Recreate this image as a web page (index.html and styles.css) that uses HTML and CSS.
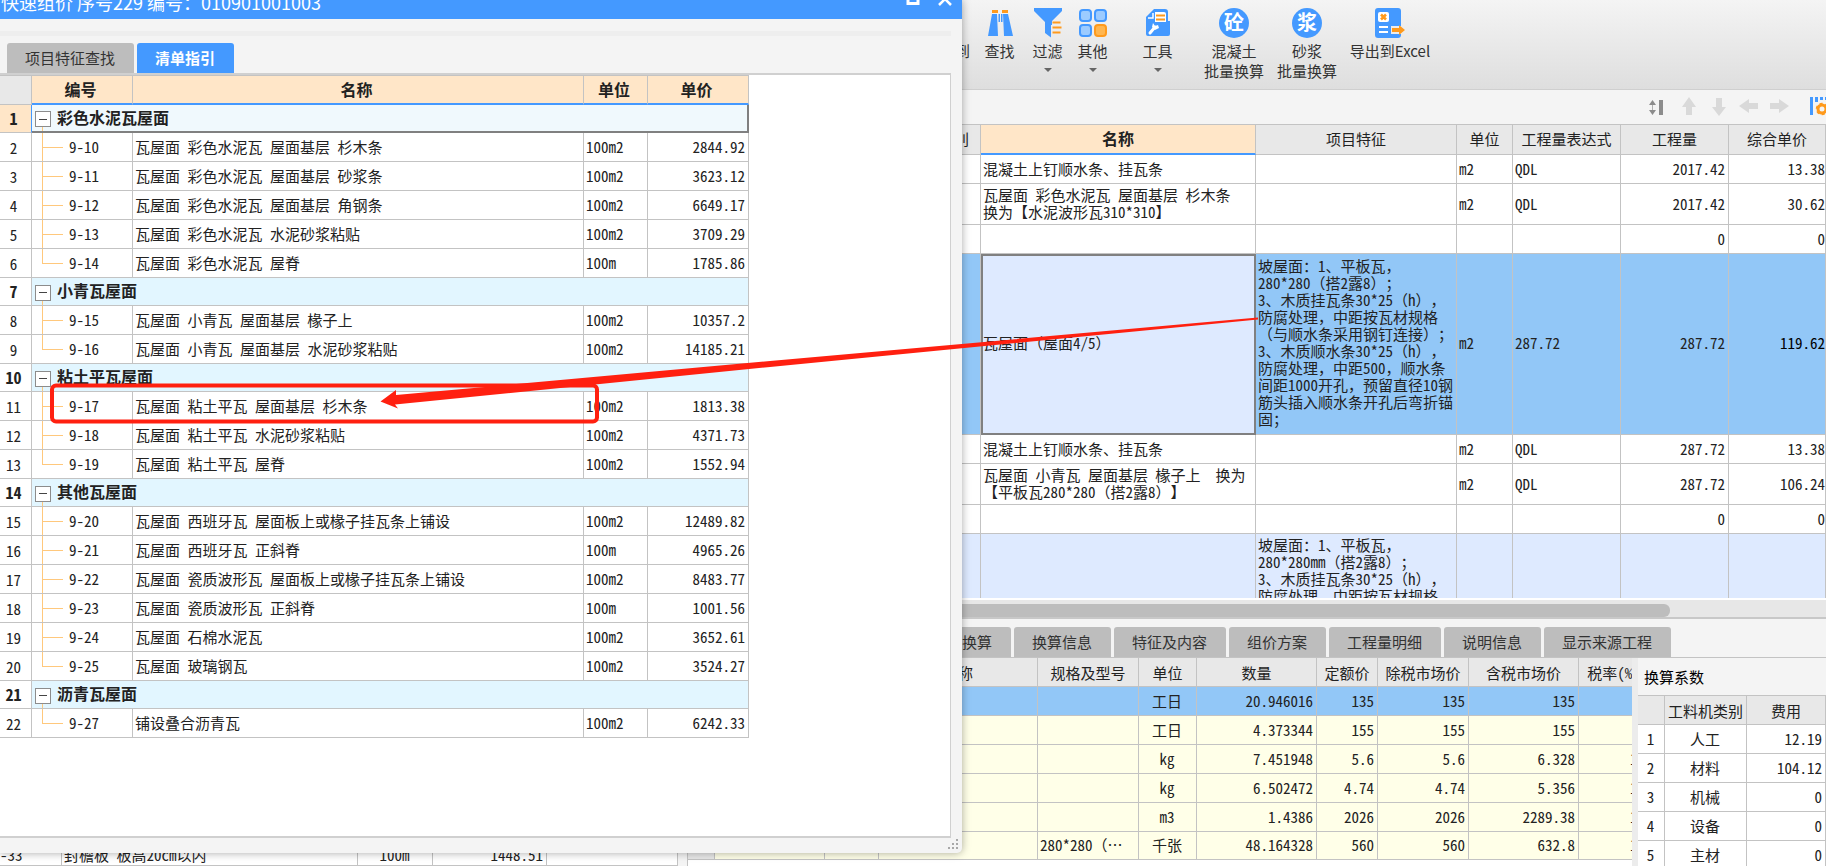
FILE: index.html
```
<!DOCTYPE html>
<html lang="zh-CN">
<head>
<meta charset="utf-8">
<title>快速组价</title>
<link rel="stylesheet" href="styles.css">
</head>
<body>
<main class="app">
  <nav class="ribbon">
    <button class="tool tool-cut"><span>到</span></button>
    <button class="tool find">
      <svg class="icon" viewBox="0 0 30 30"><path fill="#4499ff" d="M7 6h5l1 22H3zM18 6h5l5 22h-9zM13.500 6h1.500v8h-1.500zM16 6h1.500v8H16z"/><path fill="#ff9a1c" d="M7 2h6v3H7zM17 2h6v3h-6z"/></svg>
      <span>查找</span>
    </button>
    <button class="tool">
      <svg class="icon" viewBox="0 0 30 30"><path fill="#4499ff" d="M1 0h28v3L19 13v4h-1v12.500l-6-4.500V14L1 3z"/><path stroke="#ff9a1c" stroke-width="2" d="M19.500 14.500h8M19.500 19.500h9M19.500 24.500h8"/></svg>
      <span>过滤</span><i class="caret"></i>
    </button>
    <button class="tool">
      <svg class="icon" viewBox="0 0 30 30"><g stroke-width="2" stroke="#4499ff" fill="#9ccbff"><rect x="2" y="2" width="11" height="11" rx="3"/><rect x="17" y="2" width="11" height="11" rx="3"/><rect x="2" y="17" width="11" height="11" rx="3"/><rect x="17" y="17" width="11" height="11" rx="3" stroke="#ff9a1c" fill="#ffb650"/></g></svg>
      <span>其他</span><i class="caret"></i>
    </button>
    <button class="tool settings">
      <svg class="icon" viewBox="0 0 30 30"><path fill="#4499ff" d="M11 1h11q3 0 3 3v9h2v13q0 2-2 2H5q-2 0-2-2V9z"/><path fill="#fff" d="M12 4h9q2 0 2 2v8H12z"/><path stroke="#ff9a1c" stroke-width="2" d="M13 7.500h9M13 11.500h9"/><path fill="none" stroke="#fff" stroke-width="1.500" d="M10 5v5H5"/><path stroke="#fff" stroke-width="3" stroke-linecap="round" d="M7 25l5-6"/><path fill="#fff" d="M10 15l2 3 3-1 1 3-4 2-3-3z"/></svg>
      <span>工具</span><i class="caret"></i>
    </button>
    <button class="tool wide concrete"><b class="round">砼</b><span>混凝土<br>批量换算</span></button>
    <button class="tool wide mortar"><b class="round">浆</b><span>砂浆<br>批量换算</span></button>
    <button class="tool excel">
      <svg class="icon" viewBox="0 0 30 30"><rect x="0" y="0" width="26" height="30" rx="3" fill="#4499ff"/><rect x="3" y="4" width="11" height="10" rx="2" fill="#fff"/><path stroke="#ff9a1c" stroke-width="2.500" d="M6 6.500l5 5M11 6.500l-5 5"/><path stroke="#fff" stroke-width="2" d="M4 19h9M4 24h9"/><path stroke="#ececec" stroke-width="8" d="M16 22h11"/><path fill="#ff9a1c" d="M17 20h7v-3l6 5-6 5v-3h-7z"/></svg>
      <span>导出到Excel</span>
    </button>
  </nav>

  <div class="subbar">
    <button class="mini" aria-label="行高"><svg viewBox="0 0 20 20"><path fill="#8c8c8c" d="M0 8l3.500-5L7 8zM0 13l3.500 5L7 13zM10 3h4v15h-4z"/><path stroke="#b0b0b0" d="M3.500 8v5"/></svg></button>
    <button class="mini" aria-label="上移"><svg viewBox="0 0 20 20"><path fill="#d9d9d9" d="M10 0l7 10h-4v8H7v-8H3z"/></svg></button>
    <button class="mini" aria-label="下移"><svg viewBox="0 0 20 20"><path fill="#d9d9d9" d="M10 19L3 10h4V1h6v9h4z"/></svg></button>
    <button class="mini" aria-label="左移"><svg viewBox="0 0 20 20"><path fill="#d9d9d9" d="M0 9l10-7v4h9v6h-9v4z"/></svg></button>
    <button class="mini" aria-label="右移"><svg viewBox="0 0 20 20"><path fill="#d9d9d9" d="M20 9l-10-7v4H1v6h9v4z"/></svg></button>
    <button class="mini columns" aria-label="列设置"><svg viewBox="0 0 20 20"><path fill="#4499ff" d="M0 0h3v18H0zM5 0h3v5H5zM10 0h3v3h-3zM15 0h3v3h-3z"/><circle cx="12" cy="12" r="4" fill="none" stroke="#ff9a1c" stroke-width="3"/><circle cx="12" cy="12" r="5.500" fill="none" stroke="#ff9a1c" stroke-width="1.500" stroke-dasharray="3 2.700"/></svg></button>
  </div>

  <section class="budget">
    <table class="grid">
      <colgroup><col class="w-back"><col class="w-kind"><col><col class="w-feature"><col class="w-56"><col class="w-expr"><col class="w-qty"><col class="w-rate"></colgroup>
      <thead><tr><th></th><th class="kind">别</th><th class="current">名称</th><th>项目特征</th><th>单位</th><th>工程量表达式</th><th>工程量</th><th>综合单价</th></tr></thead>
      <tbody>
        <tr class="h29"><td></td><td></td><td>混凝土上钉顺水条、挂瓦条</td><td></td><td>m2</td><td>QDL</td><td class="num">2017.42</td><td class="num edge">13.38</td></tr>
        <tr class="h41"><td></td><td></td><td>瓦屋面 彩色水泥瓦 屋面基层 杉木条<br>换为【水泥波形瓦310*310】</td><td></td><td>m2</td><td>QDL</td><td class="num">2017.42</td><td class="num edge">30.62</td></tr>
        <tr class="h29"><td></td><td></td><td></td><td></td><td></td><td></td><td class="num">0</td><td class="num edge">0</td></tr>
        <tr class="h181 selected"><td></td><td></td><td class="focus">瓦屋面<span class="full">（</span>屋面4/5<span class="full">）</span></td><td>坡屋面：1、平板瓦<span class="full">，</span><br>280*280<span class="full">（</span>搭2露8<span class="full">）；</span><br>3、木质挂瓦条30*25<span class="full">（</span>h<span class="full">），</span><br>防腐处理<span class="full">，</span>中距按瓦材规格<br><span class="full">（</span>与顺水条采用钢钉连接<span class="full">）；</span><br>3、木质顺水条30*25<span class="full">（</span>h<span class="full">），</span><br>防腐处理<span class="full">，</span>中距500<span class="full">，</span>顺水条<br>间距1000开孔<span class="full">，</span>预留直径10钢<br>筋头插入顺水条开孔后弯折锚<br>固<span class="full">；</span></td><td>m2</td><td>287.72</td><td class="num">287.72</td><td class="num edge strong">119.62</td></tr>
        <tr class="h29"><td></td><td></td><td>混凝土上钉顺水条、挂瓦条</td><td></td><td>m2</td><td>QDL</td><td class="num">287.72</td><td class="num edge">13.38</td></tr>
        <tr class="h41"><td></td><td></td><td>瓦屋面 小青瓦 屋面基层 椽子上&nbsp; 换为<br>【平板瓦280*280<span class="full">（</span>搭2露8<span class="full">）</span>】</td><td></td><td>m2</td><td>QDL</td><td class="num">287.72</td><td class="num edge">106.24</td></tr>
        <tr class="h29"><td></td><td></td><td></td><td></td><td></td><td></td><td class="num">0</td><td class="num edge">0</td></tr>
        <tr class="h181 tint"><td></td><td></td><td></td><td>坡屋面：1、平板瓦<span class="full">，</span><br>280*280mm<span class="full">（</span>搭2露8<span class="full">）；</span><br>3、木质挂瓦条30*25<span class="full">（</span>h<span class="full">），</span><br>防腐处理<span class="full">，</span>中距按瓦材规格</td><td></td><td></td><td></td><td></td></tr>
      </tbody>
    </table>
  </section>
  <div class="hscroll"><div class="thumb"></div></div>

  <section class="bottom">
    <div class="catalog">
      <table class="grid">
        <colgroup><col class="w-62"><col><col class="w-75"><col class="w-114"><col class="w-131"></colgroup>
        <tbody><tr class="h20"><td class="code">-33</td><td>封檐板 板高20cm以内</td><td class="mid">100m</td><td class="num">1448.51</td><td></td></tr></tbody>
      </table>
    </div>
    <div class="splitter"></div>
    <div class="detail">
      <div class="tabs">
        <button class="tab">标准换算</button><button class="tab">换算信息</button><button class="tab">特征及内容</button><button class="tab">组价方案</button><button class="tab">工程量明细</button><button class="tab">说明信息</button><button class="tab">显示来源工程</button>
      </div>
      <div class="panes">
        <div class="labor">
          <table class="grid cream">
            <colgroup><col class="w-27"><col class="w-110"><col class="w-54"><col class="w-159"><col class="w-101"><col class="w-58"><col class="w-120"><col class="w-61"><col class="w-91"><col class="w-110"><col class="w-70"></colgroup>
            <thead><tr><th></th><th></th><th></th><th>名称</th><th>规格及型号</th><th>单位</th><th>数量</th><th>定额价</th><th>除税市场价</th><th>含税市场价</th><th>税率(%)</th></tr></thead>
            <tbody>
              <tr class="h29 selected"><th></th><td></td><td></td><td></td><td></td><td class="mid">工日</td><td class="num">20.946016</td><td class="num">135</td><td class="num">135</td><td class="num">135</td><td class="num">0</td></tr>
              <tr class="h29"><th></th><td></td><td></td><td></td><td></td><td class="mid">工日</td><td class="num">4.373344</td><td class="num">155</td><td class="num">155</td><td class="num">155</td><td class="num">0</td></tr>
              <tr class="h29"><th></th><td></td><td></td><td></td><td></td><td class="mid">kg</td><td class="num">7.451948</td><td class="num">5.6</td><td class="num">5.6</td><td class="num">6.328</td><td class="num">13</td></tr>
              <tr class="h29"><th></th><td></td><td></td><td></td><td></td><td class="mid">kg</td><td class="num">6.502472</td><td class="num">4.74</td><td class="num">4.74</td><td class="num">5.356</td><td class="num">13</td></tr>
              <tr class="h29"><th></th><td></td><td></td><td></td><td></td><td class="mid">m3</td><td class="num">1.4386</td><td class="num">2026</td><td class="num">2026</td><td class="num">2289.38</td><td class="num">13</td></tr>
              <tr class="h28"><th></th><td></td><td></td><td></td><td>280*280<span class="full">（…</span></td><td class="mid">千张</td><td class="num">48.164328</td><td class="num">560</td><td class="num">560</td><td class="num">632.8</td><td class="num">13</td></tr>
            </tbody>
          </table>
        </div>
        <aside class="factors">
          <h2>换算系数</h2>
          <table class="grid">
            <colgroup><col class="w-27"><col class="w-82"><col></colgroup>
            <thead><tr><th></th><th>工料机类别</th><th>费用</th></tr></thead>
            <tbody>
              <tr class="h29"><td class="mid">1</td><td class="mid">人工</td><td class="num">12.19</td></tr>
              <tr class="h29"><td class="mid">2</td><td class="mid">材料</td><td class="num">104.12</td></tr>
              <tr class="h29"><td class="mid">3</td><td class="mid">机械</td><td class="num">0</td></tr>
              <tr class="h29"><td class="mid">4</td><td class="mid">设备</td><td class="num">0</td></tr>
              <tr class="h29"><td class="mid">5</td><td class="mid">主材</td><td class="num">0</td></tr>
            </tbody>
          </table>
        </aside>
      </div>
    </div>
  </section>
</main>

<section class="dialog" role="dialog" aria-labelledby="dialog-title">
  <header class="titlebar">
    <h1 id="dialog-title">快速组价 序号229 编号：010901001003</h1>
    <button class="win" aria-label="最大化"><svg viewBox="0 0 14 14"><path fill="none" stroke="#fff" stroke-width="3" d="M2 0v8.500h10V0"/></svg></button>
    <button class="win" aria-label="关闭"><svg viewBox="0 0 14 14"><path fill="none" stroke="#fff" stroke-width="2.500" d="M1 -2l12 12M13 -2L1 10"/></svg></button>
  </header>
  <div class="strip"></div>
  <div class="tabs">
    <button class="tab">项目特征查找</button><button class="tab active">清单指引</button>
  </div>
  <div class="sheet">
    <table class="grid guide">
      <colgroup><col class="w-32"><col class="w-101"><col><col class="w-64"><col class="w-101"></colgroup>
      <thead><tr><th></th><th class="current">编号</th><th class="current">名称</th><th class="current">单位</th><th class="current">单价</th></tr></thead>
      <tbody>
        <tr class="h28 group first"><th>1</th><td colspan="4"><button class="fold" aria-label="折叠"></button>彩色水泥瓦屋面</td></tr>
        <tr class="h29"><th>2</th><td class="leaf">9-10</td><td>瓦屋面 彩色水泥瓦 屋面基层 杉木条</td><td>100m2</td><td class="num">2844.92</td></tr>
        <tr class="h29"><th>3</th><td class="leaf">9-11</td><td>瓦屋面 彩色水泥瓦 屋面基层 砂浆条</td><td>100m2</td><td class="num">3623.12</td></tr>
        <tr class="h29"><th>4</th><td class="leaf">9-12</td><td>瓦屋面 彩色水泥瓦 屋面基层 角钢条</td><td>100m2</td><td class="num">6649.17</td></tr>
        <tr class="h29"><th>5</th><td class="leaf">9-13</td><td>瓦屋面 彩色水泥瓦 水泥砂浆粘贴</td><td>100m2</td><td class="num">3709.29</td></tr>
        <tr class="h29"><th>6</th><td class="leaf last">9-14</td><td>瓦屋面 彩色水泥瓦 屋脊</td><td>100m</td><td class="num">1785.86</td></tr>
        <tr class="h28 group"><th>7</th><td colspan="4"><button class="fold" aria-label="折叠"></button>小青瓦屋面</td></tr>
        <tr class="h29"><th>8</th><td class="leaf">9-15</td><td>瓦屋面 小青瓦 屋面基层 椽子上</td><td>100m2</td><td class="num">10357.2</td></tr>
        <tr class="h29"><th>9</th><td class="leaf last">9-16</td><td>瓦屋面 小青瓦 屋面基层 水泥砂浆粘贴</td><td>100m2</td><td class="num">14185.21</td></tr>
        <tr class="h28 group"><th>10</th><td colspan="4"><button class="fold" aria-label="折叠"></button>粘土平瓦屋面</td></tr>
        <tr class="h29"><th>11</th><td class="leaf">9-17</td><td>瓦屋面 粘土平瓦 屋面基层 杉木条</td><td>100m2</td><td class="num">1813.38</td></tr>
        <tr class="h29"><th>12</th><td class="leaf">9-18</td><td>瓦屋面 粘土平瓦 水泥砂浆粘贴</td><td>100m2</td><td class="num">4371.73</td></tr>
        <tr class="h29"><th>13</th><td class="leaf last">9-19</td><td>瓦屋面 粘土平瓦 屋脊</td><td>100m2</td><td class="num">1552.94</td></tr>
        <tr class="h28 group"><th>14</th><td colspan="4"><button class="fold" aria-label="折叠"></button>其他瓦屋面</td></tr>
        <tr class="h29"><th>15</th><td class="leaf">9-20</td><td>瓦屋面 西班牙瓦 屋面板上或椽子挂瓦条上铺设</td><td>100m2</td><td class="num">12489.82</td></tr>
        <tr class="h29"><th>16</th><td class="leaf">9-21</td><td>瓦屋面 西班牙瓦 正斜脊</td><td>100m</td><td class="num">4965.26</td></tr>
        <tr class="h29"><th>17</th><td class="leaf">9-22</td><td>瓦屋面 瓷质波形瓦 屋面板上或椽子挂瓦条上铺设</td><td>100m2</td><td class="num">8483.77</td></tr>
        <tr class="h29"><th>18</th><td class="leaf">9-23</td><td>瓦屋面 瓷质波形瓦 正斜脊</td><td>100m</td><td class="num">1001.56</td></tr>
        <tr class="h29"><th>19</th><td class="leaf">9-24</td><td>瓦屋面 石棉水泥瓦</td><td>100m2</td><td class="num">3652.61</td></tr>
        <tr class="h29"><th>20</th><td class="leaf last">9-25</td><td>瓦屋面 玻璃钢瓦</td><td>100m2</td><td class="num">3524.27</td></tr>
        <tr class="h28 group"><th>21</th><td colspan="4"><button class="fold" aria-label="折叠"></button>沥青瓦屋面</td></tr>
        <tr class="h29"><th>22</th><td class="leaf last">9-27</td><td>铺设叠合沥青瓦</td><td>100m2</td><td class="num">6242.33</td></tr>
      </tbody>
    </table>
  </div>
  <footer class="grip"><svg viewBox="0 0 12 12"><path fill="#a8a8a8" d="M9 1h2v2H9zM5 5h2v2H5zM9 5h2v2H9zM1 9h2v2H1zM5 9h2v2H5zM9 9h2v2H9z"/></svg></footer>
</section>

<svg class="markup" width="1280" height="440" viewBox="0 0 1280 440" aria-hidden="true">
  <rect x="52" y="385.500" width="545" height="36" rx="4" fill="none" stroke="#ff2010" stroke-width="4"/>
  <path fill="#ff2010" d="M380.500 401.500L396 390v5L770 361l488-43.500v2L770 367 395 404.500l3 4z"/>
</svg>
</body>
</html>
```
FILE: styles.css
```
* { box-sizing: border-box; }

body {
  margin: 0;
  height: 100vh;
  overflow: hidden;
  position: relative;
  font-family: "Noto Sans CJK SC", sans-serif;
  font-size: 15px;
  line-height: 17px;
  color: #222;
  text-spacing-trim: space-all;
  background: #fff;
}

button {
  border: 0;
  padding: 0;
  background: none;
  font: inherit;
  color: inherit;
}

/* Main window */
.app {
  height: 100%;
  display: flex;
  flex-direction: column;
}

.ribbon {
  flex: none;
  display: flex;
  align-items: flex-start;
  height: 90px;
  padding: 8px 0 0 955px;
  overflow: hidden;
  border-bottom: 1px solid #cfcfcf;
  background: linear-gradient(#f4f4f4, #dedede);
}
.tool {
  width: 45px;
  flex: none;
  display: flex;
  flex-direction: column;
  align-items: center;
  line-height: 20px;
  white-space: nowrap;
  color: #333;
}
.tool span { margin-top: 3px; }
.tool-cut { width: 15px; padding-top: 30px; }
.find { margin: 0 3px 0 7px; }
.settings { margin: 0 24px 0 20px; }
.wide { width: 60px; }
.mortar { margin: 0 5px 0 13px; }
.excel { width: 96px; }
.icon { width: 30px; height: 30px; }
.round {
  width: 30px;
  height: 30px;
  border-radius: 50%;
  background: #4499ff;
  color: #fff;
  font-size: 20px;
  line-height: 28px;
  text-align: center;
}
.caret {
  margin-top: 7px;
  border: 4px solid transparent;
  border-top-color: #666;
}

.subbar {
  flex: none;
  display: flex;
  justify-content: flex-end;
  gap: 10px;
  height: 34px;
  padding-top: 7px;
  background: #f4f4f4;
}
.mini { width: 20px; height: 20px; }
.mini svg { display: block; width: 20px; height: 20px; }
.columns { width: 16px; margin-left: 11px; overflow: hidden; }

/* Tables */
.grid {
  width: 100%;
  table-layout: fixed;
  border-collapse: separate;
  border-spacing: 0;
  background: #fff;
}
.grid th, .grid td {
  padding: 0 3px 2px 2px;
  border-right: 1px solid #c3c3c3;
  border-bottom: 1px solid #c3c3c3;
  font-weight: 400;
  white-space: nowrap;
  overflow: hidden;
  text-align: left;
  font-feature-settings: "hwid";
}
.grid .full { font-feature-settings: normal; }
.grid th {
  text-align: center;
  padding: 0;
  background: #e8e8e8;
}
.grid thead th { height: 29px; }
.grid .num { text-align: right; }
.grid .mid { text-align: center; }
.grid thead .current {
  background: #ffe6c8;
  border-bottom: 2px solid #4499ff;
  font-size: 16px;
  font-weight: 700;
}
.h20 { height: 20px; }
.h28 { height: 28px; }
.h29 { height: 29px; }
.h41 { height: 41px; }
.h181 { height: 181px; }

.budget {
  flex: 1 1 0;
  min-height: 0;
  overflow: hidden;
  border-top: 1px solid #c3c3c3;
}
.budget thead th { height: 30px; padding-bottom: 2px; }
.budget .kind { padding-left: 15px; }
.grid .edge { padding-right: 0; }
.grid .strong { color: #000; }
.selected td { background: #92c7f7; }
.budget .selected td { padding-bottom: 4px; }
.budget .tint td { background: #deeaff; vertical-align: top; padding-top: 2px; }
.budget .selected .focus { background: #deeaff; border: 2px solid #808080; padding: 0 1px 4px 0; }

.hscroll {
  flex: none;
  height: 21px;
  padding: 4px 156px 2px 0;
  border-top: 2px solid #fff;
  border-bottom: 2px solid #c8c8c8;
  background: #e7e7e7;
}
.thumb { height: 13px; border-radius: 6px; background: #bdbdbd; }

.bottom { flex: none; display: flex; height: 247px; }
.catalog {
  width: 678px;
  flex: none;
  display: flex;
  align-items: flex-end;
}
.catalog .code { padding-left: 0; }
.splitter { width: 10px; flex: none; background: #f4f4f4; border-right: 1px solid #c3c3c3; }
.detail { flex: 1; min-width: 0; display: flex; flex-direction: column; }

.tabs {
  flex: none;
  display: flex;
  gap: 3px;
  background: #f4f4f4;
}
.tab {
  height: 30px;
  padding: 0 19px 2px 18px;
  border-radius: 3px 3px 0 0;
  background: #bdbdbd;
  white-space: nowrap;
  color: #333;
}
.active { background: #4499ff; color: #fff; font-weight: 700; }
.detail .tabs { padding: 8px 0 0 226px; border-bottom: 1px solid #c3c3c3; }

.panes { flex: 1; min-height: 0; display: flex; }
.labor { flex: 1; min-width: 0; overflow: hidden; }
.labor .grid { width: 961px; }
.cream tbody td { background: #ffffe8; }
.cream .selected td { background: #92c7f7; }
.factors {
  width: 194px;
  flex: none;
  overflow: hidden;
  border-left: 6px solid #ececec;
  background: #f4f4f4;
}
.factors h2 {
  margin: 0;
  padding-left: 6px;
  font-size: 15px;
  font-weight: 400;
  line-height: 37px;
  color: #000;
}
.factors .grid { border-top: 1px solid #c3c3c3; }

/* Floating window */
.dialog {
  position: absolute;
  left: 0;
  top: 0;
  bottom: 13px;
  width: 52.7%;
  display: flex;
  flex-direction: column;
  overflow: hidden;
  border-radius: 0 0 5px 0;
  background: #f4f4f4;
  box-shadow: 0 0 9px rgba(0, 0, 0, 0.35);
}
.titlebar {
  flex: none;
  display: flex;
  align-items: center;
  gap: 18px;
  height: 35px;
  margin-top: -16px;
  padding: 0 10px 0 1px;
  background: #4499ff;
  color: #fff;
}
.titlebar h1 {
  flex: 1;
  margin: 0;
  font-size: 18px;
  font-weight: 400;
  line-height: 24px;
  white-space: nowrap;
}
.win { width: 14px; height: 14px; }
.win svg { display: block; width: 14px; height: 14px; overflow: visible; }
.strip { flex: none; height: 5px; margin: 12px 11px 7px 0; background: #eee; }
.dialog .tabs { padding-left: 7px; }
.sheet {
  flex: 1;
  min-height: 0;
  margin-right: 11px;
  overflow: hidden;
  border: 2px solid #d0d0d0;
  border-width: 2px 1px 2px 0;
  background: #fff;
}
.grip { flex: none; display: flex; justify-content: flex-end; height: 15px; padding-right: 3px; }
.grip svg { width: 12px; height: 12px; }

.guide { width: 749px; border-top: 1px solid #c3c3c3; }
.guide thead .current { padding-right: 3px; }
.guide tbody th { background: #fff; padding-right: 4px; }
.guide .group th { font-weight: 700; font-size: 16px; }
.guide .group td {
  padding: 0 0 0 3px;
  background: #e2f6ff linear-gradient(#ffc87c, #ffc87c) 10px 100% / 1px 6px no-repeat;
  font-size: 16px;
  font-weight: 700;
}
.guide .first th { background: #ffe6c8; border-right-color: #4499ff; }
.guide .first td {
  background-color: #f0f9fd;
  border-right: 2px solid #808080;
  border-bottom: 2px solid #808080;
}
.fold {
  width: 16px;
  height: 16px;
  margin-right: 6px;
  border: 1px solid #8c8c8c;
  vertical-align: middle;
  background: #fff linear-gradient(#444, #444) center / 8px 1px no-repeat;
}
.guide .leaf {
  padding-left: 37px;
  background:
    linear-gradient(#ffc87c, #ffc87c) 10px 0 / 1px 100% no-repeat,
    linear-gradient(#ffc87c, #ffc87c) 10px 50% / 21px 1px no-repeat;
}
.guide .last {
  background:
    linear-gradient(#ffc87c, #ffc87c) 10px 0 / 1px 50% no-repeat,
    linear-gradient(#ffc87c, #ffc87c) 10px 50% / 21px 1px no-repeat;
}

/* Red callout drawn over both windows */
.markup { position: absolute; left: 0; top: 0; pointer-events: none; }

/* Column widths */
.w-back { width: 928px; }
.w-kind { width: 53px; }
.w-feature { width: 201px; }
.w-56 { width: 56px; }
.w-expr { width: 108px; }
.w-qty { width: 108px; }
.w-rate { width: 97px; }
.w-27 { width: 27px; }
.w-32 { width: 32px; }
.w-54 { width: 54px; }
.w-58 { width: 58px; }
.w-61 { width: 61px; }
.w-62 { width: 62px; }
.w-64 { width: 64px; }
.w-70 { width: 70px; }
.w-75 { width: 75px; }
.w-82 { width: 82px; }
.w-91 { width: 91px; }
.w-101 { width: 101px; }
.w-110 { width: 110px; }
.w-114 { width: 114px; }
.w-120 { width: 120px; }
.w-131 { width: 131px; }
.w-159 { width: 159px; }
```
